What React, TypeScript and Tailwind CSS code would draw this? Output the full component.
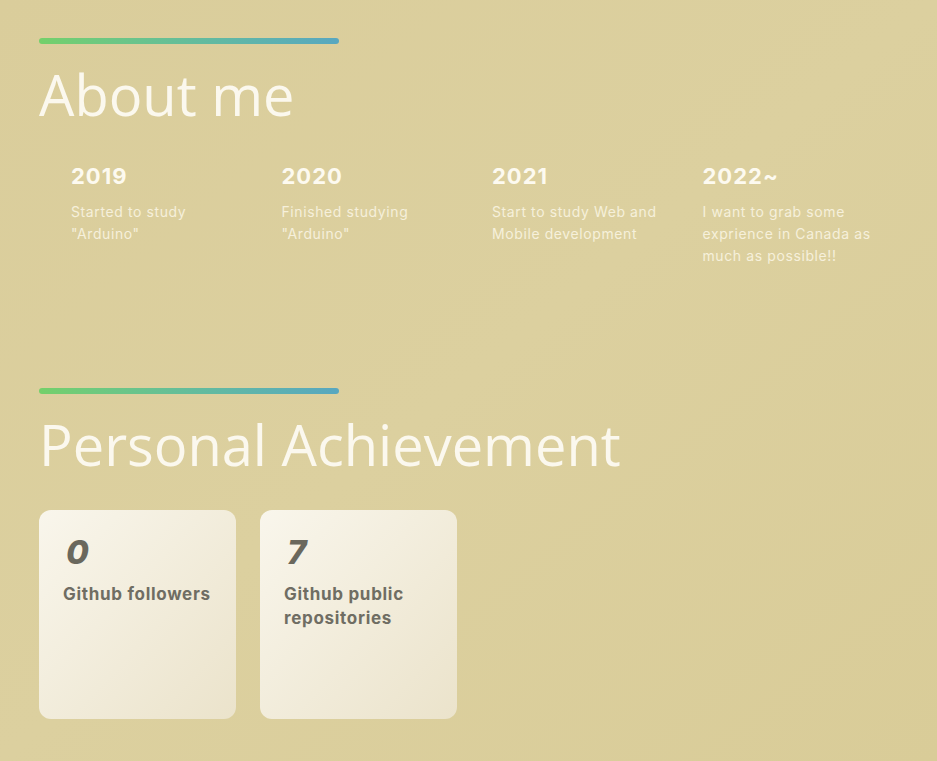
const timeline = [
  { year: '2019', text: 'Started to study "Arduino"' },
  { year: '2020', text: 'Finished studying "Arduino"' },
  { year: '2021', text: 'Start to study Web and Mobile development' },
  { year: '2022~', text: 'I want to grab some exprience in Canada as much as possible!!' },
];

const stats = [
  { value: '0', label: 'Github followers' },
  { value: '7', label: 'Github public repositories' },
];

function SectionTitle({ title }: { title: string }) {
  return (
    <div>
      <div className="h-[6px] w-[300px] rounded-full bg-gradient-to-r from-[#74d06a] to-[#58a7c0]" />
      <h2 className="mt-[14px] text-[56px] leading-[72px] font-normal text-[#fbf8ee] font-['Open_Sans',sans-serif]">
        {title}
      </h2>
    </div>
  );
}

export default function App() {
  return (
    <div className="min-h-[761px] bg-gradient-to-br from-[#dacd9b] via-[#dcd09f] to-[#d9cc98] px-[39px] pt-[38px] pb-10 font-['Inter',sans-serif]">
      <section>
        <SectionTitle title="About me" />
        <div className="mt-[32px] grid w-[842px] grid-cols-4">
          {timeline.map((item) => (
            <div key={item.year} className="pl-8 pr-2">
              <h3 className="text-[22px] leading-[28px] font-bold tracking-[1px] text-[#fdfaf0]">{item.year}</h3>
              <p className="mt-[11px] text-[14px] leading-[22px] tracking-[0.6px] text-[#f6f0db]">
                {item.text}
              </p>
            </div>
          ))}
        </div>
      </section>

      <section className="mt-[121px]">
        <SectionTitle title="Personal Achievement" />
        <div className="mt-[30px] flex gap-6">
          {stats.map((s) => (
            <div
              key={s.label}
              className="h-[209px] w-[197px] rounded-xl bg-gradient-to-br from-[#f9f6ec] to-[#ebe3cb] px-6 pt-[24px]"
            >
              <div className="pl-[3px] text-[33px] leading-[36px] font-extrabold italic text-[#6a685d]">
                {s.value}
              </div>
              <div className="mt-[12px] text-[17px] leading-[24px] font-bold tracking-[0.7px] text-[#6f6d63]">
                {s.label}
              </div>
            </div>
          ))}
        </div>
      </section>
    </div>
  );
}
